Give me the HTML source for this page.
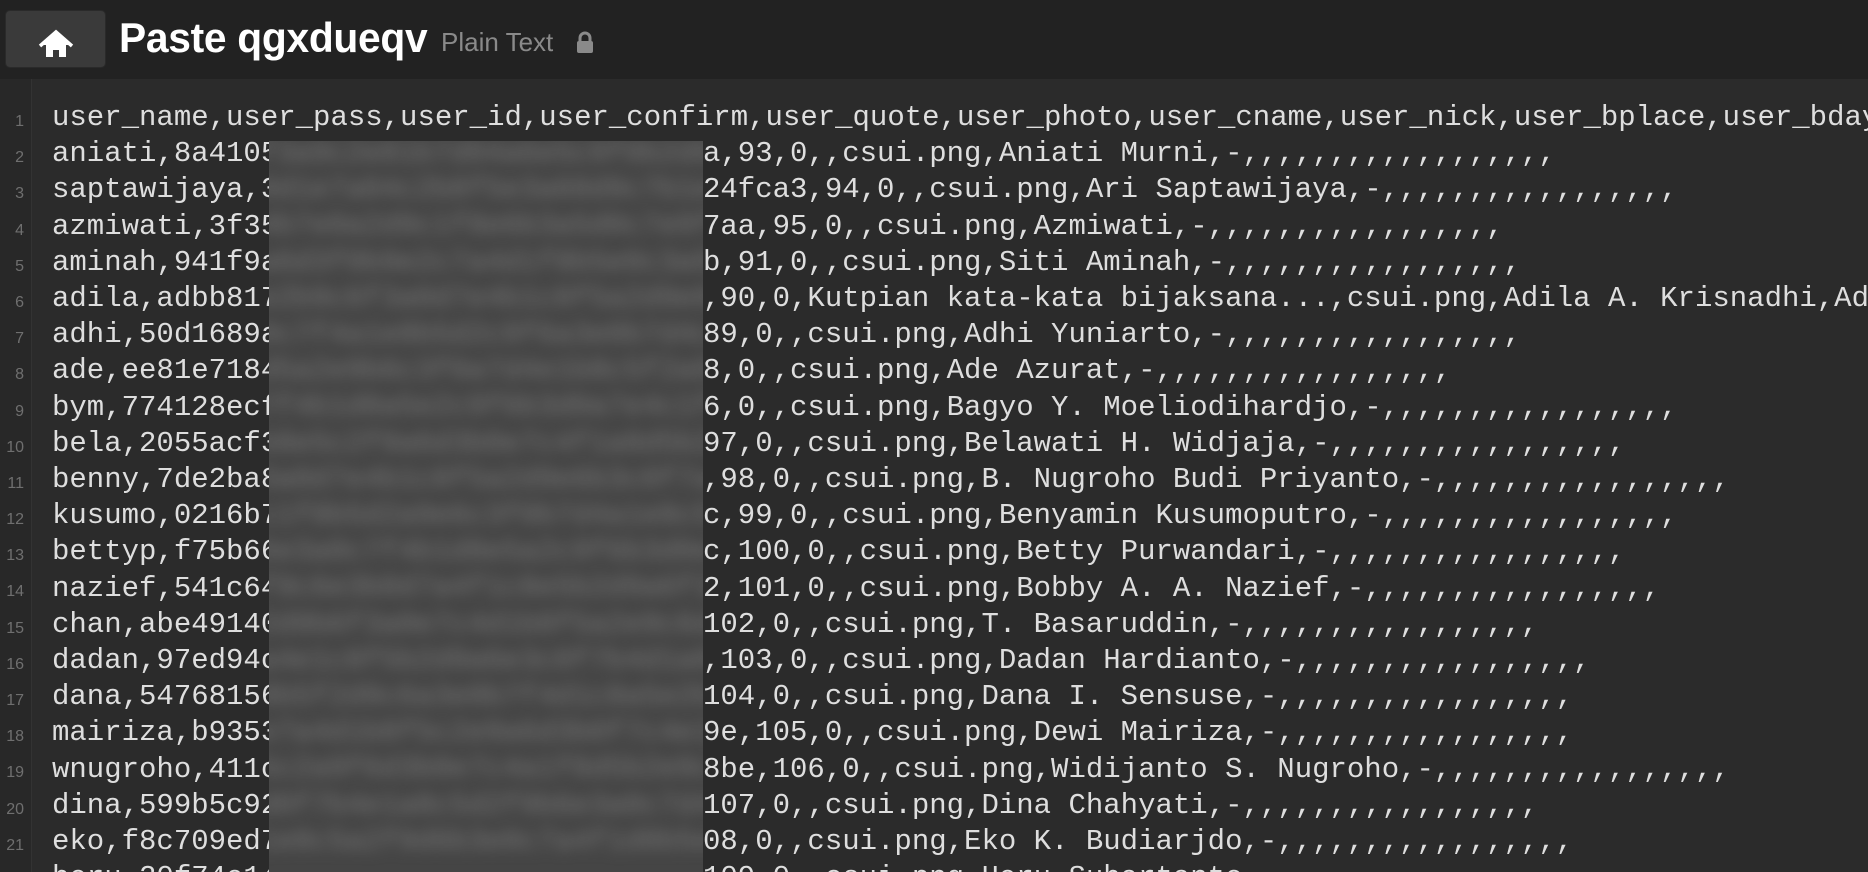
<!DOCTYPE html>
<html><head><meta charset="utf-8"><style>
html,body{margin:0;padding:0;width:1868px;height:872px;overflow:hidden;background:#2b2b2b}
#wrap{position:relative;width:1868px;height:872px;overflow:hidden}
#hdr{position:absolute;left:0;top:0;width:1868px;height:79px;background:#222}
#home{position:absolute;left:5px;top:10px;width:101px;height:58px;background:#3a3a3a;border-radius:5px;border:1px solid #2a2a2a;box-sizing:border-box}
#title{position:absolute;left:119px;top:14px;font:bold 42px "Liberation Sans",sans-serif;color:#fff;letter-spacing:-0.3px;transform:scaleX(0.97);transform-origin:left;white-space:nowrap}
#pt{position:absolute;left:441px;top:27px;font:26px "Liberation Sans",sans-serif;color:#8a8a8a;white-space:nowrap}
#lock{position:absolute;left:576px;top:31px}
#gut{position:absolute;left:0;top:79px;width:31px;height:793px;background:#282828;border-right:1px solid #333}
#nums{position:absolute;left:0;top:100px;width:24px;text-align:right;font:16px/36.2px "Liberation Sans",sans-serif;color:#6f6f6f}
#nums div{height:36.2px;padding-top:4px;box-sizing:border-box}
.col{position:absolute;top:100px;white-space:pre;font:29px/36.2px "Liberation Mono",monospace;color:#dedede;overflow:hidden}
#c1{left:52px;width:1816px}
#c2{left:52px;top:136.2px;width:217px}
#c3{left:703px;top:136.2px;width:1165px}
#blur{position:absolute;left:269px;top:141px;width:434px;height:731px;background:#454545;overflow:hidden}
#blur pre{position:absolute;left:-10px;top:-5px;margin:0;font:29px/36.2px "Liberation Mono",monospace;color:#777;filter:blur(7px)}
</style></head><body><div id="wrap">
<div id="hdr">
<div id="home"><svg width="101" height="58" viewBox="0 0 101 58"><path d="M50 22 L37 34 L40 34 L40 46 L47 46 L47 39 L53 39 L53 46 L60 46 L60 34 L63 34 Z" fill="#fff"/><path d="M34 35 L50 21 L66 35" stroke="#fff" stroke-width="3.5" fill="none"/></svg></div>
<div id="title">Paste qgxdueqv</div>
<div id="pt">Plain Text</div>
<svg id="lock" width="18" height="23" viewBox="0 0 18 23"><path d="M4 10 V7 a5 5 0 0 1 10 0 V10" stroke="#8a8a8a" stroke-width="3" fill="none"/><rect x="1" y="10" width="16" height="12" rx="2" fill="#8a8a8a"/></svg>
</div>
<div id="gut"></div>
<div id="nums"><div>1</div><div>2</div><div>3</div><div>4</div><div>5</div><div>6</div><div>7</div><div>8</div><div>9</div><div>10</div><div>11</div><div>12</div><div>13</div><div>14</div><div>15</div><div>16</div><div>17</div><div>18</div><div>19</div><div>20</div><div>21</div><div>22</div></div>
<div class="col" id="c1">user_name,user_pass,user_id,user_confirm,user_quote,user_photo,user_cname,user_nick,user_bplace,user_bday,user_address</div>
<div class="col" id="c2">aniati,8a4105
saptawijaya,3
azmiwati,3f35
aminah,941f9a
adila,adbb817
adhi,50d1689a
ade,ee81e7184
bym,774128ecf
bela,2055acf3
benny,7de2ba8
kusumo,0216b7
bettyp,f75b66
nazief,541c64
chan,abe49140
dadan,97ed94c
dana,54768156
mairiza,b9353
wnugroho,411c
dina,599b5c92
eko,f8c709ed7
heru,20f74e14</div>
<div class="col" id="c3">a,93,0,,csui.png,Aniati Murni,-,,,,,,,,,,,,,,,,,,
24fca3,94,0,,csui.png,Ari Saptawijaya,-,,,,,,,,,,,,,,,,,
7aa,95,0,,csui.png,Azmiwati,-,,,,,,,,,,,,,,,,,
b,91,0,,csui.png,Siti Aminah,-,,,,,,,,,,,,,,,,,
,90,0,Kutpian kata-kata bijaksana...,csui.png,Adila A. Krisnadhi,Adila
89,0,,csui.png,Adhi Yuniarto,-,,,,,,,,,,,,,,,,,
8,0,,csui.png,Ade Azurat,-,,,,,,,,,,,,,,,,,
6,0,,csui.png,Bagyo Y. Moeliodihardjo,-,,,,,,,,,,,,,,,,,
97,0,,csui.png,Belawati H. Widjaja,-,,,,,,,,,,,,,,,,,
,98,0,,csui.png,B. Nugroho Budi Priyanto,-,,,,,,,,,,,,,,,,,
c,99,0,,csui.png,Benyamin Kusumoputro,-,,,,,,,,,,,,,,,,,
c,100,0,,csui.png,Betty Purwandari,-,,,,,,,,,,,,,,,,,
2,101,0,,csui.png,Bobby A. A. Nazief,-,,,,,,,,,,,,,,,,,
102,0,,csui.png,T. Basaruddin,-,,,,,,,,,,,,,,,,,
,103,0,,csui.png,Dadan Hardianto,-,,,,,,,,,,,,,,,,,
104,0,,csui.png,Dana I. Sensuse,-,,,,,,,,,,,,,,,,,
9e,105,0,,csui.png,Dewi Mairiza,-,,,,,,,,,,,,,,,,,
8be,106,0,,csui.png,Widijanto S. Nugroho,-,,,,,,,,,,,,,,,,,
107,0,,csui.png,Dina Chahyati,-,,,,,,,,,,,,,,,,,
08,0,,csui.png,Eko K. Budiarjdo,-,,,,,,,,,,,,,,,,,
109,0,,csui.png,Heru Suhartanto,-,,,,,,,,,,,,,,,,,</div>
<div id="blur"><pre>f3a9c2e81b7d04a6e5c9f0b2d81a3e7c4b6
9d1e7a04c2b8f5e3a60d9c7b1e4f2a8d05c
4b7e0a2d9c1f8e6b3a5d0c7e9f2b4a1d8e6
a6d3f0b9e2c7a4d1f8b5e0c3a9d6f2b7e41
e2b9c6f3a0d7e4b1c8f5a2d9e6b3c0f7a4d
0c7f4a1e8b5d2c9f6a3e0b7d4c1f8a5e2b9
d5a2e9b6c3f0a7d4e1b8c5f2a9d6e3b0c7f
7f4b1d8a5e2c9f6b3d0a7e4c1f8b5d2a9e6
b8e5c2f9a6d3b0e7c4f1a8d5b2e9c6f3a0d
3a0d7e4b1c8f5a2d9e6b3c0f7a4d1e8b5c2
c1f8b5d2a9e6c3f0b7d4a1e8c5f2b9d6a3e
6e3a0c7f4b1d8e5a2c9f6b3d0e7a4c1f8b5
f9c6e3b0d7a4f1c8e5b2d9a6f3c0e7b4d1a
2d9b6f3a0e7c4d1b8f5a2e9c6d3b0f7a4e1
a4e1c8f5b2d9a6e3c0f7b4d1a8e5c2f9b6d
8b5f2d9c6a3e0b7f4d1c8a5e2b9f6d3c0a7
e7a4d1b8f5c2e9a6d3b0f7c4e1a8d5b2f9c
5c2a9f6d3b0e7c4a1f8d5b2e9c6a3f0d7b4
d0f7b4e1a8c5d2f9b6e3a0c7d4f1b8e5a2c
1e8c5a2f9d6b3e0c7a4f1d8b5e2c9a6f3d0</pre></div>
</div></body></html>
